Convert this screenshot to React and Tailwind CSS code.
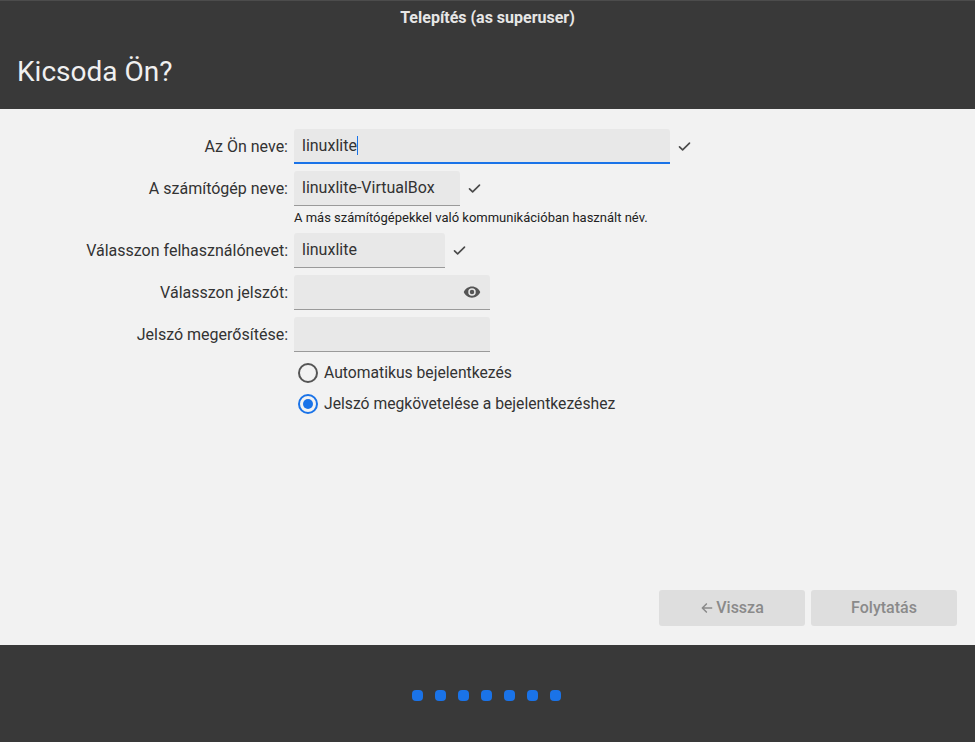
import { useState } from 'react';

const Check = () => (
  <svg width="15" height="15" viewBox="0 0 24 24" className="shrink-0">
    <path d="M4 12.5l5 5L20 6.5" fill="none" stroke="#4a4a4a" strokeWidth="2.6" strokeLinecap="round" strokeLinejoin="round" />
  </svg>
);

const Eye = () => (
  <svg width="18" height="18" viewBox="0 0 24 24">
    <path
      fill="#555"
      d="M12 4.5C7 4.5 2.73 7.61 1 12c1.73 4.39 6 7.5 11 7.5s9.27-3.11 11-7.5c-1.73-4.39-6-7.5-11-7.5zM12 17a5 5 0 110-10 5 5 0 010 10zm0-8a3 3 0 100 6 3 3 0 000-6z"
    />
  </svg>
);

const Field = ({ label, width, value, focused, children, after }) => (
  <div className="flex items-center">
    <div className="w-[288px] text-right text-[16px] text-[#333]">{label}</div>
    <div
      className={`ml-[6px] h-[35px] flex items-center justify-between px-2 rounded-t-[3px] bg-[#e8e8e8] ${
        focused ? 'border-b-2 border-[#1a73e8]' : 'border-b border-[#9a9a9a]'
      } ${width}`}
    >
      <span className="text-[16px] text-[#333]">
        {value}
        {focused && <span className="inline-block w-px h-[19px] bg-[#1a73e8] align-middle -mt-[2px]" />}
      </span>
      {children}
    </div>
    {after}
  </div>
);

const Radio = ({ checked, label, onClick }) => (
  <button onClick={onClick} className="flex items-center gap-[6px] ml-[4px] h-[31px]">
    <span
      className={`w-[20px] h-[20px] rounded-full border-2 flex items-center justify-center ${
        checked ? 'border-[#1a73e8]' : 'border-[#555]'
      }`}
    >
      {checked && <span className="w-[10px] h-[10px] rounded-full bg-[#1a73e8]" />}
    </span>
    <span className="text-[15.7px] text-[#333]">{label}</span>
  </button>
);

export default function App() {
  const [autoLogin, setAutoLogin] = useState(false);

  return (
    <div className="w-[975px] h-[742px] flex flex-col bg-[#f2f2f2] font-['Roboto',sans-serif]">
      {/* Header */}
      <div className="h-[109px] bg-[#393939] border-t border-[#4c4c4c] flex flex-col">
        <div className="h-[34px] flex items-center justify-center text-[16px] font-bold text-[#e6e6e6]">
          Telepítés (as superuser)
        </div>
        <div className="flex-1 flex items-center px-[17px] pb-[1px] text-[28px] text-[#f0f0f0]">Kicsoda Ön?</div>
      </div>

      {/* Form */}
      <div className="flex-1 flex flex-col pt-[20px]">
        <div className="flex flex-col gap-[7px]">
          <Field label="Az Ön neve:" width="w-[376px]" value="linuxlite" focused after={<span className="ml-[7px]"><Check /></span>} />
          <div>
            <Field label="A számítógép neve:" width="w-[166px]" value="linuxlite-VirtualBox" after={<span className="ml-[7px]"><Check /></span>} />
            <div className="ml-[294px] mt-[4px] mb-[1px] text-[13px] leading-[15px] text-[#222]">
              A más számítógépekkel való kommunikációban használt név.
            </div>
          </div>
          <Field label="Válasszon felhasználónevet:" width="w-[151px]" value="linuxlite" after={<span className="ml-[7px]"><Check /></span>} />
          <Field label="Válasszon jelszót:" width="w-[196px]" value="">
            <span className="mr-[1px]"><Eye /></span>
          </Field>
          <Field label="Jelszó megerősítése:" width="w-[196px]" value="" />
        </div>

        <div className="ml-[294px] mt-[5px] flex flex-col">
          <Radio checked={autoLogin} onClick={() => setAutoLogin(true)} label="Automatikus bejelentkezés" />
          <Radio checked={!autoLogin} onClick={() => setAutoLogin(false)} label="Jelszó megkövetelése a bejelentkezéshez" />
        </div>

        <div className="mt-auto flex justify-end gap-[6px] pr-[18px] pb-[19px]">
          <button className="w-[146px] h-[36px] rounded-[3px] bg-[#dedede] text-[16px] font-medium text-[#8a8a8a] flex items-center justify-center gap-[2px]">
            <svg width="14" height="14" viewBox="0 0 24 24">
              <path d="M20 12H5M11 5l-7 7 7 7" fill="none" stroke="#8a8a8a" strokeWidth="2.6" strokeLinecap="round" strokeLinejoin="round" />
            </svg>
            Vissza
          </button>
          <button className="w-[146px] h-[36px] rounded-[3px] bg-[#dedede] text-[16px] font-medium text-[#8a8a8a]">
            Folytatás
          </button>
        </div>
      </div>

      {/* Footer */}
      <div className="h-[97px] bg-[#393939] flex items-center justify-center gap-[12px] pt-[3px] pr-[2px]">
        {[0, 1, 2, 3, 4, 5, 6].map((i) => (
          <span key={i} className="w-[11px] h-[11px] rounded-[4px] bg-[#1a73e8]" />
        ))}
      </div>
    </div>
  );
}
